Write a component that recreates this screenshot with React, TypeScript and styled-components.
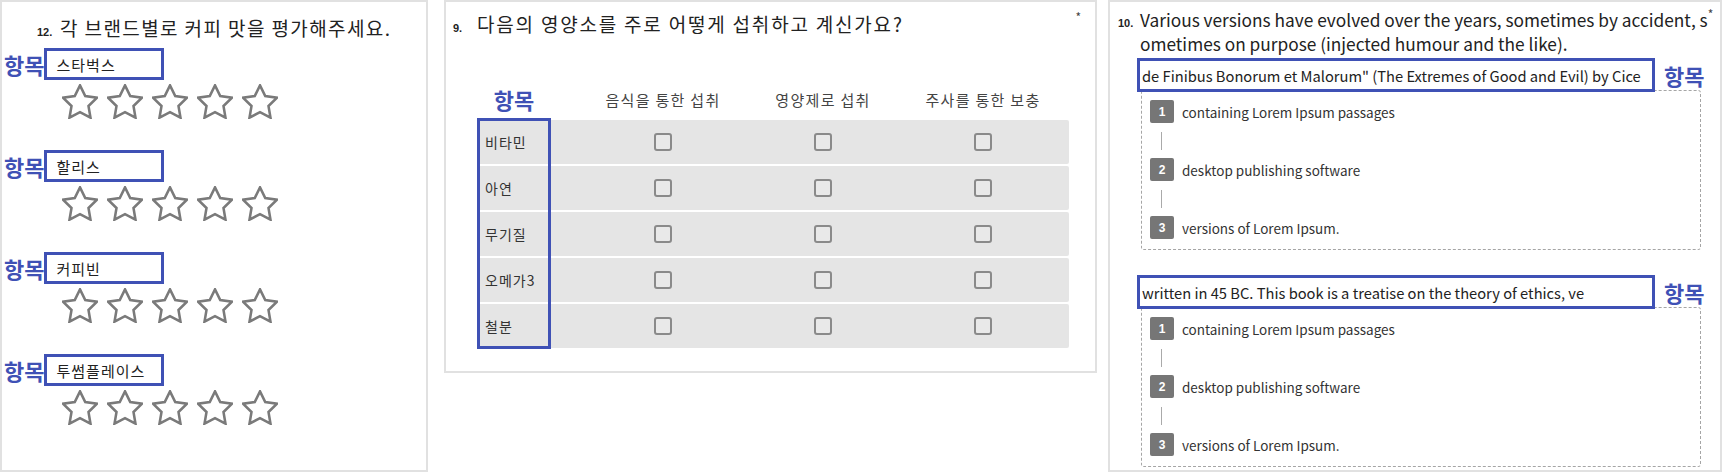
import React from "react";
import styled, { createGlobalStyle } from "styled-components";

const BLUE = "#3f51b5";
const KR = `"Noto Sans CJK KR", "Noto Sans", sans-serif`;

const brands = ["스타벅스", "할리스", "커피빈", "투썸플레이스"];
const nutrients = ["비타민", "아연", "무기질", "오메가3", "철분"];
const methods = ["음식을 통한 섭취", "영양제로 섭취", "주사를 통한 보충"];
const orderGroups = [
  'de Finibus Bonorum et Malorum" (The Extremes of Good and Evil) by Cice',
  "written in 45 BC. This book is a treatise on the theory of ethics, ve",
];
const steps = ["containing Lorem Ipsum passages", "desktop publishing software", "versions of Lorem Ipsum."];

const GlobalStyle = createGlobalStyle`
  html, body { margin: 0; padding: 0; background: #fff; }
  body { font-family: ${KR}; color: #222; }
  * { box-sizing: border-box; }
`;

const Page = styled.div`
  display: flex;
  align-items: flex-start;
  width: 1723px;
  height: 475px;
  overflow: hidden;
`;

const Panel = styled.section<{ $width: number; $height: number; $offset: number }>`
  flex: none;
  width: ${(p) => p.$width}px;
  height: ${(p) => p.$height}px;
  margin-left: ${(p) => p.$offset}px;
  border: 2px solid #e1e1e1;
  background: #fff;
`;

const QuestionHead = styled.div<{ $pad: string }>`
  display: flex;
  align-items: baseline;
  padding: ${(p) => p.$pad};
`;

const QNum = styled.span<{ $width: number }>`
  flex: none;
  width: ${(p) => p.$width}px;
  font-family: "Liberation Sans", sans-serif;
  font-size: 11px;
  font-weight: 700;
  color: #222;
`;

const QText = styled.div<{ $size: number; $line: number; $spacing?: number }>`
  font-size: ${(p) => p.$size}px;
  line-height: ${(p) => p.$line}px;
  letter-spacing: ${(p) => p.$spacing ?? 0}px;
  color: #222;
  white-space: nowrap;
`;

const Required = styled.span<{ $right: number }>`
  flex: none;
  margin-left: auto;
  margin-right: ${(p) => p.$right}px;
  align-self: flex-start;
  font-size: 12px;
  line-height: 12px;
  color: #444;
`;

const ItemTag = styled.span<{ $gap?: number }>`
  flex: none;
  margin-left: ${(p) => p.$gap ?? 0}px;
  font-size: 22px;
  font-weight: 700;
  line-height: 1;
  color: ${BLUE};
`;

/* ---- panel 12: star ratings ---- */

const BrandList = styled.div`
  display: flex;
  flex-direction: column;
  gap: 31px;
  margin-top: 8px;
  padding-left: 2px;
`;

const Brand = styled.div`
  display: flex;
  flex-direction: column;
`;

const ItemRow = styled.div`
  display: flex;
  align-items: center;
  height: 32px;
`;

const NameBox = styled.div`
  width: 120px;
  height: 32px;
  border: 3px solid ${BLUE};
  display: flex;
  align-items: center;
  padding-left: 9px;
  font-size: 15px;
  letter-spacing: 1px;
  color: #222;
`;

const Stars = styled.div`
  display: flex;
  gap: 9px;
  margin: 4px 0 0 58px;
`;

const StarIcon = () => (
  <svg width="36" height="35" viewBox="1.4 1.2 21.2 20.6">
    <polygon
      points="12,2 15.09,8.26 22,9.27 17,14.14 18.18,21.02 12,17.77 5.82,21.02 7,14.14 2,9.27 8.91,8.26"
      fill="none"
      stroke="#7a7a7a"
      strokeWidth="1.5"
      strokeLinejoin="miter"
    />
  </svg>
);

/* ---- panel 9: matrix ---- */

const Matrix = styled.div`
  width: 592px;
  margin: 43px 0 0 31px;
`;

const GRID = "106px repeat(3, 160px) 1fr";

const MatrixHead = styled.div`
  display: grid;
  grid-template-columns: ${GRID};
  align-items: center;
  height: 38px;
`;

const HeadTag = styled(ItemTag)`
  width: 74px;
  text-align: center;
`;

const ColLabel = styled.div`
  text-align: center;
  font-size: 15px;
  letter-spacing: 1.3px;
  color: #444;
`;

const MatrixBody = styled.div`
  position: relative;
  display: flex;
  flex-direction: column;
  gap: 2px;
  margin-top: 2px;
`;

const MatrixRow = styled.div`
  display: grid;
  grid-template-columns: ${GRID};
  align-items: center;
  height: 44px;
  background: #e5e5e5;
  border-radius: 2px;
`;

const RowLabel = styled.div`
  padding-left: 8px;
  font-size: 14px;
  letter-spacing: 1px;
  color: #333;
`;

const CheckCell = styled.div`
  display: flex;
  justify-content: center;
`;

const CheckBox = styled.span`
  width: 18px;
  height: 18px;
  border: 2px solid #8a8a8a;
  border-radius: 3px;
  background: #e9e9e9;
`;

const ColumnHighlight = styled.div`
  position: absolute;
  left: 0;
  top: -2px;
  bottom: -1px;
  width: 74px;
  border: 3px solid ${BLUE};
  pointer-events: none;
`;

/* ---- panel 10: ordering ---- */

const OrderList = styled.div`
  display: flex;
  flex-direction: column;
  gap: 25px;
  margin-top: 2px;
  padding-left: 27px;
`;

const OrderGroup = styled.div`
  display: flex;
  flex-direction: column;
`;

const OrderHead = styled.div`
  position: relative;
  z-index: 1;
  display: flex;
  align-items: center;
  height: 34px;
`;

const AnswerBox = styled.div`
  width: 518px;
  height: 34px;
  border: 3px solid ${BLUE};
  background: #fff;
  display: flex;
  align-items: center;
  padding-left: 2px;
  font-size: 14.7px;
  color: #222;
  white-space: nowrap;
  overflow: hidden;
`;

const StepBox = styled.div`
  margin: -2px 0 0 4px;
  width: 560px;
  border: 1px dashed #a5a5a5;
  border-radius: 3px;
  padding: 9px 0 10px 8px;
`;

const Step = styled.div`
  display: flex;
  align-items: center;
  height: 23px;
`;

const Badge = styled.span`
  flex: none;
  width: 24px;
  height: 23px;
  border-radius: 2px;
  background: #767676;
  color: #fff;
  font-family: "Liberation Sans", sans-serif;
  font-size: 12px;
  font-weight: 700;
  display: flex;
  align-items: center;
  justify-content: center;
`;

const StepText = styled.span`
  margin-left: 8px;
  font-size: 13.5px;
  color: #333;
`;

const Connector = styled.div`
  width: 1px;
  height: 18px;
  margin: 9px 0 8px 11px;
  background: #aaa;
`;

export default function App() {
  return (
    <>
      <GlobalStyle />
      <Page>
        <Panel $width={428} $height={472} $offset={0}>
          <QuestionHead $pad="14px 0 0 35px">
            <QNum $width={23}>12.</QNum>
            <QText $size={19} $line={24} $spacing={1.4}>
              각 브랜드별로 커피 맛을 평가해주세요.
            </QText>
          </QuestionHead>
          <BrandList>
            {brands.map((b) => (
              <Brand key={b}>
                <ItemRow>
                  <ItemTag>항목</ItemTag>
                  <NameBox>{b}</NameBox>
                </ItemRow>
                <Stars>
                  {[0, 1, 2, 3, 4].map((i) => (
                    <StarIcon key={i} />
                  ))}
                </Stars>
              </Brand>
            ))}
          </BrandList>
        </Panel>

        <Panel $width={653} $height={373} $offset={16}>
          <QuestionHead $pad="9px 0 0 7px">
            <QNum $width={24}>9.</QNum>
            <QText $size={19} $line={26} $spacing={1.8}>
              다음의 영양소를 주로 어떻게 섭취하고 계신가요?
            </QText>
            <Required $right={14}>*</Required>
          </QuestionHead>
          <Matrix>
            <MatrixHead>
              <HeadTag>항목</HeadTag>
              {methods.map((m) => (
                <ColLabel key={m}>{m}</ColLabel>
              ))}
            </MatrixHead>
            <MatrixBody>
              {nutrients.map((n) => (
                <MatrixRow key={n}>
                  <RowLabel>{n}</RowLabel>
                  {methods.map((m) => (
                    <CheckCell key={m}>
                      <CheckBox />
                    </CheckCell>
                  ))}
                </MatrixRow>
              ))}
              <ColumnHighlight />
            </MatrixBody>
          </Matrix>
        </Panel>

        <Panel $width={614} $height={472} $offset={11}>
          <QuestionHead $pad="6px 0 0 8px">
            <QNum $width={22}>10.</QNum>
            <QText $size={17.3} $line={24}>
              Various versions have evolved over the years, sometimes by accident, s
              <br />
              ometimes on purpose (injected humour and the like).
            </QText>
            <Required $right={10}>*</Required>
          </QuestionHead>
          <OrderList>
            {orderGroups.map((g) => (
              <OrderGroup key={g}>
                <OrderHead>
                  <AnswerBox>{g}</AnswerBox>
                  <ItemTag $gap={9}>항목</ItemTag>
                </OrderHead>
                <StepBox>
                  {steps.map((s, i) => (
                    <React.Fragment key={s}>
                      {i > 0 && <Connector />}
                      <Step>
                        <Badge>{i + 1}</Badge>
                        <StepText>{s}</StepText>
                      </Step>
                    </React.Fragment>
                  ))}
                </StepBox>
              </OrderGroup>
            ))}
          </OrderList>
        </Panel>
      </Page>
    </>
  );
}
